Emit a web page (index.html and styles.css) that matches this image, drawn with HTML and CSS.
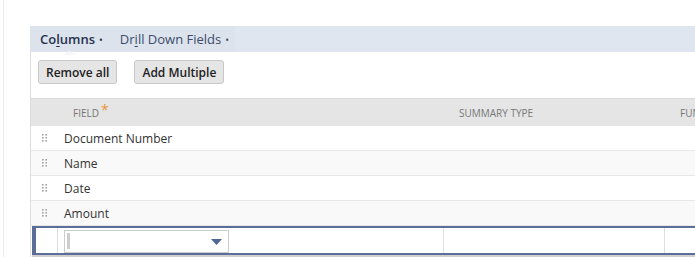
FILE: index.html
```html
<!DOCTYPE html>
<html lang="en">
<head>
    <meta charset="UTF-8">
    <meta name="viewport" content="width=device-width, initial-scale=1.0">
    <title>Columns</title>
    <link rel="stylesheet" href="styles.css">
</head>
<body>
    <div class="page">
        <div class="subtabs">
            <div class="tab-group">
                <span class="tab active">Co<u>l</u>umns<span class="dot">&bull;</span></span>
                <span class="tab">Dr<u>i</u>ll Down Fields<span class="dot">&bull;</span></span>
            </div>
        </div>

        <div class="panel">
            <div class="button-row">
                <button class="btn">Remove all</button>
                <button class="btn">Add Multiple</button>
            </div>

            <div class="grid">
                <div class="grid-row header">
                    <div class="cell"></div>
                    <div class="cell">Field<span class="req">*</span></div>
                    <div class="cell">Summary Type</div>
                    <div class="cell">Function</div>
                </div>

                <div class="grid-row">
                    <div class="cell handle"><svg width="6" height="8" viewBox="0 0 6 8"><g fill="#a5a5a5"><rect x="0" y="0" width="1.6" height="1.6"/><rect x="3.4" y="0" width="1.6" height="1.6"/><rect x="0" y="3" width="1.6" height="1.6"/><rect x="3.4" y="3" width="1.6" height="1.6"/><rect x="0" y="6" width="1.6" height="1.6"/><rect x="3.4" y="6" width="1.6" height="1.6"/></g></svg></div>
                    <div class="cell">Document Number</div>
                    <div class="cell"></div>
                    <div class="cell"></div>
                </div>
                <div class="grid-row alt">
                    <div class="cell handle"><svg width="6" height="8" viewBox="0 0 6 8"><g fill="#a5a5a5"><rect x="0" y="0" width="1.6" height="1.6"/><rect x="3.4" y="0" width="1.6" height="1.6"/><rect x="0" y="3" width="1.6" height="1.6"/><rect x="3.4" y="3" width="1.6" height="1.6"/><rect x="0" y="6" width="1.6" height="1.6"/><rect x="3.4" y="6" width="1.6" height="1.6"/></g></svg></div>
                    <div class="cell">Name</div>
                    <div class="cell"></div>
                    <div class="cell"></div>
                </div>
                <div class="grid-row">
                    <div class="cell handle"><svg width="6" height="8" viewBox="0 0 6 8"><g fill="#a5a5a5"><rect x="0" y="0" width="1.6" height="1.6"/><rect x="3.4" y="0" width="1.6" height="1.6"/><rect x="0" y="3" width="1.6" height="1.6"/><rect x="3.4" y="3" width="1.6" height="1.6"/><rect x="0" y="6" width="1.6" height="1.6"/><rect x="3.4" y="6" width="1.6" height="1.6"/></g></svg></div>
                    <div class="cell">Date</div>
                    <div class="cell"></div>
                    <div class="cell"></div>
                </div>
                <div class="grid-row alt">
                    <div class="cell handle"><svg width="6" height="8" viewBox="0 0 6 8"><g fill="#a5a5a5"><rect x="0" y="0" width="1.6" height="1.6"/><rect x="3.4" y="0" width="1.6" height="1.6"/><rect x="0" y="3" width="1.6" height="1.6"/><rect x="3.4" y="3" width="1.6" height="1.6"/><rect x="0" y="6" width="1.6" height="1.6"/><rect x="3.4" y="6" width="1.6" height="1.6"/></g></svg></div>
                    <div class="cell">Amount</div>
                    <div class="cell"></div>
                    <div class="cell"></div>
                </div>

                <div class="grid-row edit">
                    <div class="cell"></div>
                    <div class="cell">
                        <div class="dropdown">
                            <span class="caret"></span>
                            <svg class="arrow" width="11" height="6" viewBox="0 0 11 6"><path d="M0 0 L11 0 L5.5 6 Z" fill="#4f6694"/></svg>
                        </div>
                    </div>
                    <div class="cell"></div>
                    <div class="cell"></div>
                </div>
            </div>
        </div>
    </div>
</body>
</html>
```

FILE: styles.css
```css
body {
    margin: 0;
    font-family: "Open Sans", "Liberation Sans", Arial, sans-serif;
    background: white;
    overflow: hidden;
}

.page {
    margin-left: 3px;
    border-left: 1px solid #ececec;
    padding-top: 26px;
    padding-left: 26px;
    height: 257px;
    box-sizing: border-box;
}

.subtabs {
    height: 26px;
    background: #e0e6ef;
    display: flex;
}

.tab-group {
    display: flex;
    align-items: center;
    background: #dde3ed;
    width: 205px;
    padding-left: 10px;
    box-sizing: border-box;
}

.tab {
    position: relative;
    font-size: 13px;
    color: #3b4b69;
    margin-right: 17px;
    white-space: nowrap;
}

.tab.active {
    font-weight: 600;
    color: #26324d;
}

.tab.active::after {
    content: "";
    position: absolute;
    left: 22px;
    bottom: -7px;
    border-left: 7px solid transparent;
    border-right: 7px solid transparent;
    border-bottom: 4px solid #f4f6f9;
}

.tab u {
    text-decoration-thickness: 1px;
    text-underline-offset: 2px;
}

.dot {
    font-size: 10px;
    margin-left: 4px;
    font-weight: 400;
}

.panel {
    border-left: 1px solid #dcdcdc;
    height: 205px;
}

.button-row {
    display: flex;
    gap: 17px;
    padding: 8px 0 0 7px;
    height: 38px;
    box-sizing: border-box;
}

.btn {
    height: 24px;
    padding: 0 7px;
    font-family: "Open Sans", "Liberation Sans", Arial, sans-serif;
    font-size: 12px;
    font-weight: 600;
    color: #222;
    background: #e5e5e5;
    border: 1px solid #c8c8c8;
    border-radius: 3px;
}

.grid {
    margin-top: 8px;
    border-top: 1px solid #d9d9d9;
}

.grid-row {
    display: grid;
    grid-template-columns: 27px 386px 221px 1fr;
    height: 24px;
    border-bottom: 1px solid #e8e8e8;
    background: white;
    font-size: 12px;
    color: #333;
}

.grid-row.alt {
    background: #f9f9f9;
}

.grid-row .cell {
    display: flex;
    align-items: center;
    padding-left: 6px;
    white-space: nowrap;
    overflow: hidden;
}

.grid-row.header {
    height: 27px;
    background: #e5e5e5;
    border-bottom: none;
    font-size: 10px;
    color: #777;
    text-transform: uppercase;
}

.grid-row.header .cell {
    padding-left: 15px;
}

.req {
    color: #e9953b;
    font-size: 14px;
    margin-left: 2px;
    position: relative;
    top: -3px;
}

.grid-row .cell.handle {
    padding-left: 11px;
}

.grid-row.edit {
    height: 25px;
    border-top: 2px solid #5a6e98;
    border-bottom: 2px solid #5a6e98;
    border-left: 4px solid #5a6e98;
    margin-left: 1px;
    box-shadow: 0 2px 0 #cfcfcf;
    grid-template-columns: 22px 386px 221px 1fr;
}

.grid-row.edit .cell {
    border-right: 1px solid #dedede;
}

.grid-row.edit .cell:last-child {
    border-right: none;
}

.dropdown {
    position: relative;
    width: 165px;
    height: 23px;
    box-sizing: border-box;
    border: 1px solid #cccccc;
    background: white;
    margin-top: 1px;
}

.caret {
    position: absolute;
    left: 2px;
    top: 2px;
    width: 3px;
    height: 16px;
    background: #cdcdcd;
}

.arrow {
    position: absolute;
    right: 6px;
    top: 8px;
}
```
